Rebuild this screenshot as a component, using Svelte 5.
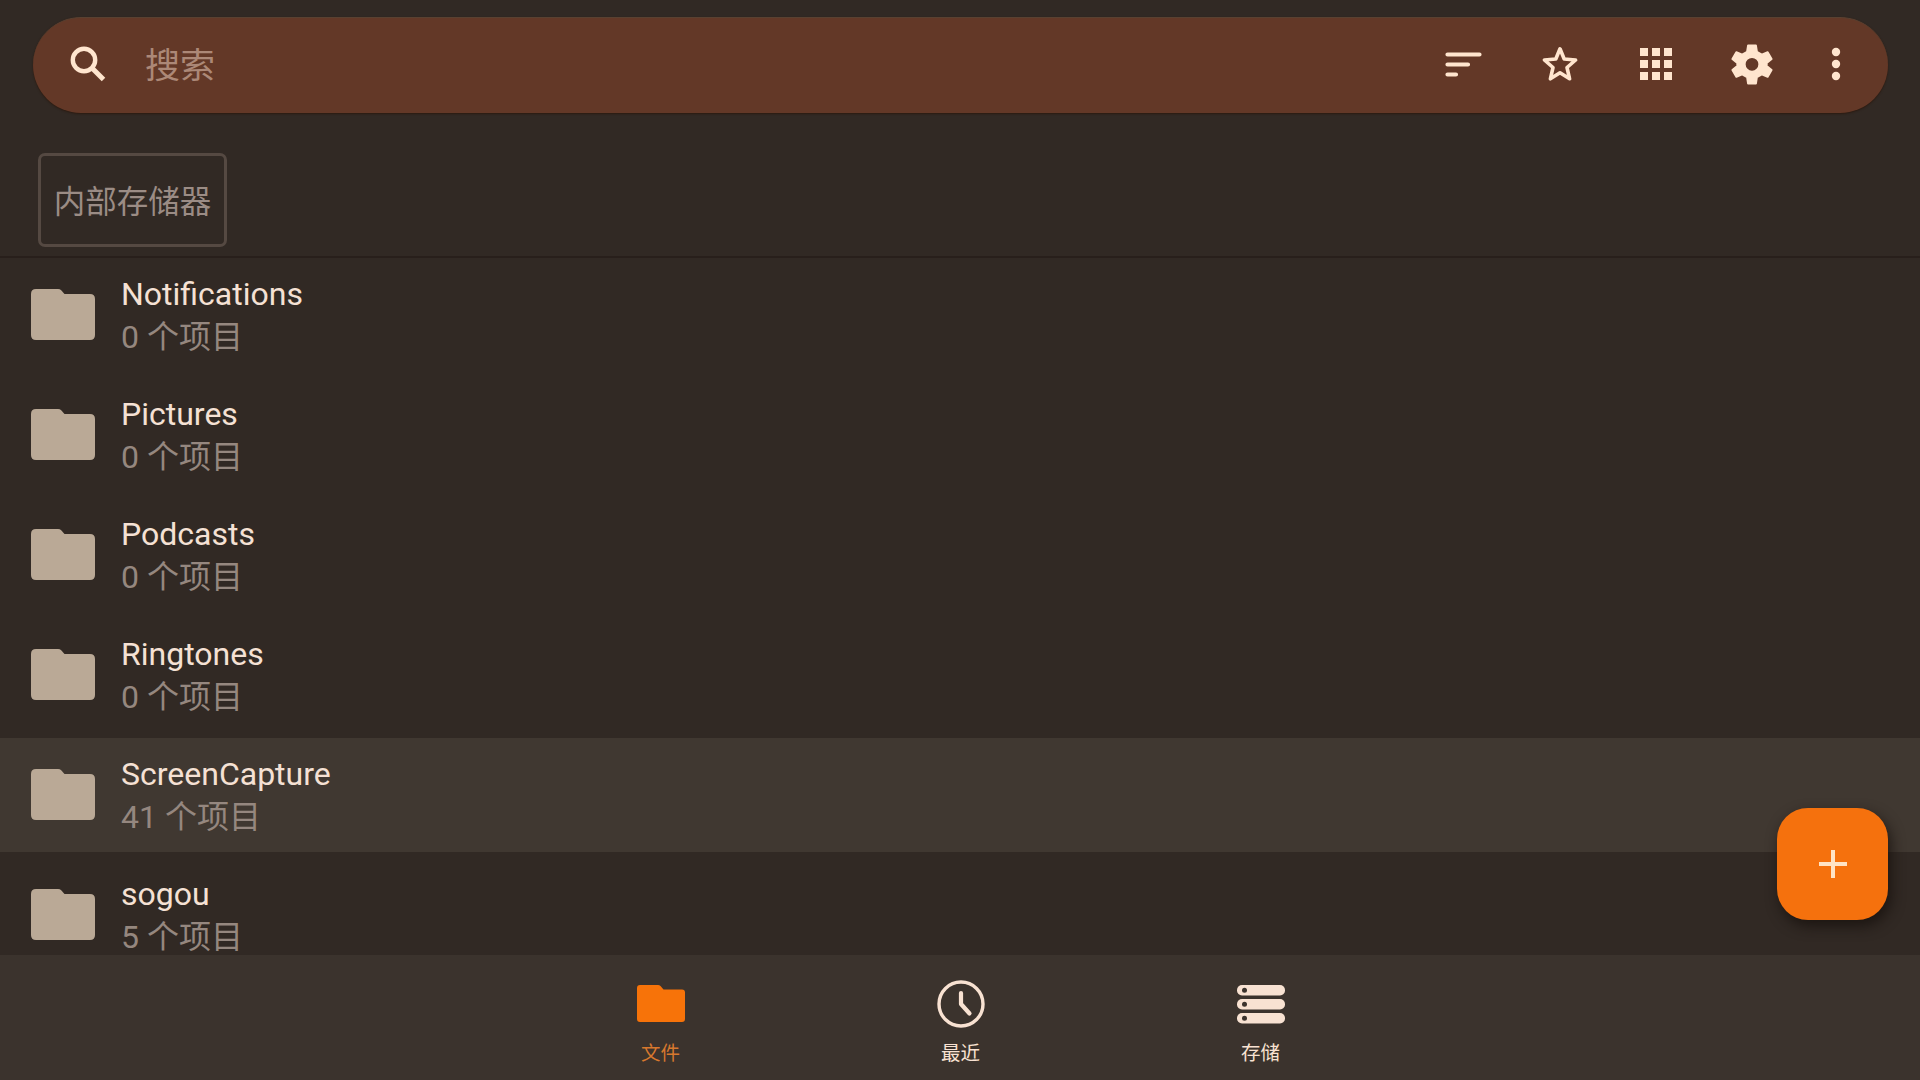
<script>
  const folders = [
    { name: 'Notifications', count: 0 },
    { name: 'Pictures', count: 0 },
    { name: 'Podcasts', count: 0 },
    { name: 'Ringtones', count: 0 },
    { name: 'ScreenCapture', count: 41, active: true },
    { name: 'sogou', count: 5 }
  ];
</script>

<div class="app">
  <header>
    <div class="search">
      <svg class="lens" viewBox="0 0 36 36"><circle cx="14" cy="14" r="11.2" fill="none" stroke="currentColor" stroke-width="4.4" /><path d="M22 22l11.500 11.500" stroke="currentColor" stroke-width="5" /></svg>
      <span class="placeholder">搜索</span>
      <div class="tools">
        <svg viewBox="0 0 48 48"><path d="M7.500 14.500h32M7.500 24.500h20.500M7.500 34.500h8.500" stroke="currentColor" stroke-width="4.200" stroke-linecap="round" /></svg>
        <svg viewBox="0 0 48 48"><path fill="none" stroke="currentColor" stroke-width="3.600" stroke-linejoin="round" d="M24 8.800L28.200 19L39.600 20L31 27.500L33.600 38.800L24 32.800L14.400 38.800L17 27.500L8.400 20L19.800 19Z" /></svg>
        <svg viewBox="0 0 24 24"><path fill="currentColor" d="M4 8h4V4H4v4zm6 12h4v-4h-4v4zm-6 0h4v-4H4v4zm0-6h4v-4H4v4zm6 0h4v-4h-4v4zm6-10v4h4V4h-4zm-6 4h4V4h-4v4zm6 6h4v-4h-4v4zm0 6h4v-4h-4v4z" /></svg>
        <svg viewBox="-0.5 -0.5 49 49"><path fill="currentColor" stroke="currentColor" stroke-width="2" stroke-linejoin="round" fill-rule="evenodd" d="M20 5h8l1 6.500 5 2.900 6-2.400 4 6.800-5 4.200v3l5 4.200-4 6.800-6-2.400-5 2.900-1 6.500h-8l-1-6.500-5-2.900-6 2.400-4-6.800 5-4.200v-3l-5-4.200 4-6.800 6 2.400 5-2.900zM24 16.800a7.500 7.500 0 1 0 0 15a7.500 7.500 0 1 0 0-15z" /></svg>
        <svg class="more" viewBox="0 0 24 24"><g fill="currentColor"><circle cx="12" cy="6" r="2.100" /><circle cx="12" cy="12" r="2.100" /><circle cx="12" cy="18" r="2.100" /></g></svg>
      </div>
    </div>
    <div class="crumb">内部存储器</div>
  </header>

  <main>
    {#each folders as f}
      <div class="row" class:active={f.active}>
        <svg viewBox="0 0 64 51"><path fill="currentColor" d="M5 0h22q2 0 3.200 1.300L33.500 5H59q5 0 5 5v36q0 5-5 5H5q-5 0-5-5V5q0-5 5-5z" /></svg>
        <div class="label">
          <div class="name">{f.name}</div>
          <div class="count">{f.count} 个项目</div>
        </div>
      </div>
    {/each}
  </main>

  <nav>
    <div class="tab on">
      <svg viewBox="0 0 48 48"><path fill="currentColor" d="M3 5h18q1.500 0 2.500 1l3 3.500H45q3 0 3 3V39q0 3-3 3H3q-3 0-3-3V8q0-3 3-3z" /></svg>
      <span>文件</span>
    </div>
    <div class="tab">
      <svg viewBox="0 0 48 48"><g fill="none" stroke="currentColor" stroke-width="3.400"><circle cx="24" cy="24" r="22" /><path d="M24 13v11l8.500 9.500" stroke-width="4.200" stroke-linecap="round" stroke-linejoin="round" /></g></svg>
      <span>最近</span>
    </div>
    <div class="tab">
      <svg viewBox="0 0 48 48"><g fill="currentColor"><rect y="5" width="48" height="10.500" rx="5" /><rect y="19" width="48" height="10.500" rx="5" /><rect y="33" width="48" height="10.500" rx="5" /></g><g fill="#3b332d"><circle cx="7.500" cy="10.200" r="2.500" /><circle cx="7.500" cy="24.200" r="2.500" /><circle cx="7.500" cy="38.200" r="2.500" /></g></svg>
      <span>存储</span>
    </div>
  </nav>

  <button class="fab" aria-label="新建"><svg viewBox="0 0 30 30"><path d="M15 1v28M1 15h28" stroke="currentColor" stroke-width="4" /></svg></button>
</div>

<style>
  :global(body) { margin: 0; background: #312924; }
  .app { position: relative; width: 1920px; height: 1080px; overflow: hidden; display: flex; flex-direction: column; background: #312924; color: #f8e2d2; font-family: Roboto, "Noto Sans CJK SC", sans-serif; }
  svg { display: block; flex: none; }
  header { box-sizing: border-box; height: 258px; padding: 17px 32px 0 33px; border-bottom: 2px solid #281f1b; flex: none; }
  .search { box-sizing: border-box; height: 96px; border-radius: 48px; background: #633827; border-top: 1px solid #594131; box-shadow: 0 1px 2px #2b1a10; display: flex; align-items: center; padding: 0 28px 3px 37px; color: #ffe5ce; }
  .lens { width: 36px; height: 36px; }
  .placeholder { margin: 6px 0 0 39px; font-size: 35px; line-height: 48px; color: #ac8877; }
  .tools { margin-left: auto; display: flex; align-items: center; gap: 48px; }
  .tools svg { width: 48px; height: 48px; }
  .tools .more { margin-left: -12px; }
  .crumb { box-sizing: border-box; width: 189px; height: 94px; margin: 40px 0 0 5px; padding-bottom: 2px; border: 3px solid #554942; border-radius: 7px; display: flex; align-items: center; justify-content: center; font-size: 31.500px; color: #9b8c85; white-space: nowrap; }
  main { box-sizing: border-box; flex: 1; min-height: 0; overflow: hidden; display: flex; flex-direction: column; gap: 6px; }
  .row { box-sizing: border-box; height: 114px; flex: none; display: flex; align-items: flex-start; padding: 31px 31px 0; color: #baa996; }
  .active { background: #403831; }
  .row svg { width: 64px; height: 51px; }
  .label { margin: -17px 0 0 26px; white-space: nowrap; }
  .name { font-size: 32px; line-height: 44px; color: #f5e1d4; }
  .count { font-size: 32px; line-height: 42px; color: #95877f; }
  nav { height: 125px; flex: none; background: #3b332d; display: flex; justify-content: center; gap: 180px; padding-left: 1px; }
  .tab { width: 120px; padding-top: 25px; display: flex; flex-direction: column; align-items: center; }
  .tab svg { width: 48px; height: 48px; }
  .tab span { margin-top: 11px; font-size: 19.500px; line-height: 30px; }
  .on svg { color: #f77309; }
  .on span { color: #d7782d; }
  .fab { position: absolute; left: 1777px; top: 808px; width: 111px; height: 112px; padding: 0; border: 0; border-radius: 31px; display: flex; align-items: center; justify-content: center; background: #f5710d; color: #ffe3c4; box-shadow: 3px 6px 14px #17100ccc; }
  .fab svg { width: 30px; height: 30px; }
</style>
